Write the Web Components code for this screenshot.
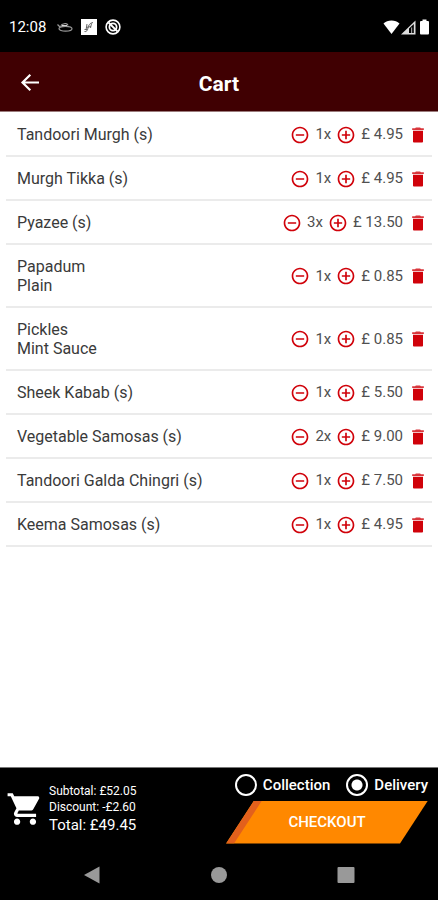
<!DOCTYPE html>
<html lang="en">
<head>
<meta charset="utf-8">
<meta name="viewport" content="width=device-width, initial-scale=1">
<title>Cart</title>
<style>
  body { margin: 0; background: #fff; font-family: Roboto, "Liberation Sans", sans-serif; }
</style>
</head>
<body>
<cart-screen>
  <status-bar slot="top">12:08</status-bar>
  <app-header slot="top">Cart</app-header>
  <cart-item qty="1" price="4.95">Tandoori Murgh (s)</cart-item>
  <cart-item qty="1" price="4.95">Murgh Tikka (s)</cart-item>
  <cart-item qty="3" price="13.50">Pyazee (s)</cart-item>
  <cart-item qty="1" price="0.85">Papadum<span slot="option">Plain</span></cart-item>
  <cart-item qty="1" price="0.85">Pickles<span slot="option">Mint Sauce</span></cart-item>
  <cart-item qty="1" price="5.50">Sheek Kabab (s)</cart-item>
  <cart-item qty="2" price="9.00">Vegetable Samosas (s)</cart-item>
  <cart-item qty="1" price="7.50">Tandoori Galda Chingri (s)</cart-item>
  <cart-item qty="1" price="4.95">Keema Samosas (s)</cart-item>
  <cart-summary slot="bottom">
    <span slot="subtotal">Subtotal: £52.05</span>
    <span slot="discount">Discount: -£2.60</span>
    <span slot="total">Total: £49.45</span>
  </cart-summary>
  <system-nav slot="bottom"></system-nav>
</cart-screen>

<script>
  const define = (name, html, setup) => {
    const template = document.createElement('template');
    template.innerHTML = html;
    customElements.define(name, class extends HTMLElement {
      constructor() {
        super();
        this.attachShadow({ mode: 'open' }).append(template.content.cloneNode(true));
      }
      connectedCallback() { if (setup) setup(this, this.shadowRoot); }
    });
  };

  define('cart-screen', `
    <style>
      :host { display: flex; flex-direction: column; min-height: 100vh; }
      main { flex: 1; padding: 1px 6px 0; }
    </style>
    <slot name="top"></slot>
    <main role="list"><slot></slot></main>
    <slot name="bottom"></slot>`);

  define('status-bar', `
    <style>
      :host { display: flex; align-items: center; justify-content: space-between; height: 50px;
        padding: 2px 6px 0 9px; background: #000; color: #fff; font-size: 15px; line-height: 20px; }
      div { display: flex; align-items: center; }
      .left { gap: 8px; }
      .note { margin-left: 3px; }
      svg { display: block; }
    </style>
    <div class="left">
      <slot></slot>
      <svg class="note" width="16" height="16" viewBox="0 0 16 16" fill="none" stroke="#999" stroke-width="1.200">
        <path d="M.5 5.500 3 8"/>
        <path d="M4 8.500c-.5-2 .8-3.500 2.500-3.500 1-.8 4-.8 4.500 1.500"/>
        <path d="M5 7h5" stroke="#ddd" stroke-width="2"/>
        <ellipse cx="8.500" cy="9.800" rx="6.500" ry="2.400"/>
      </svg>
      <svg width="16" height="16" viewBox="0 0 16 16">
        <path fill="#fff" d="M0 0h16v16H0z"/>
        <g fill="none" stroke="#666" stroke-width="1"><path d="M3.500 12.500c2 .5 3-1 3.500-3.500s1.500-5 5-5.500M5 8.500l5-1M6 5l-.8 5M10.500 4.500 9.500 9M3.500 10.500h3"/></g>
      </svg>
      <svg width="16" height="16" viewBox="0 0 16 16" fill="none" stroke="#fff">
        <circle cx="8" cy="8" r="6.900" stroke-width="1.600"/>
        <circle cx="8" cy="8" r="3.600" stroke-width="1.800"/>
        <path stroke-width="1.800" d="m3.500 3.500 9 9"/>
      </svg>
    </div>
    <div>
      <svg width="17" height="16" viewBox="0 0 17 16"><path fill="#fff" d="M.5 4.500C2.500 2.500 5.300 1.500 8.500 1.500s6 1 8 3L8.500 15z"/></svg>
      <svg width="16" height="16" viewBox="0 0 16 16"><path fill="#ddd" d="M15.500 1.500V15.500H1z"/><path fill="#000" d="M9 9.500 13.800 5v9H9z"/><path fill="#999" d="M11 8.500h1.200V14H11z"/></svg>
      <svg width="16" height="16" viewBox="0 0 16 16"><path fill="#fff" d="M6.500.5h4V2h1.200c.9 0 1.300.5 1.300 1.300v10.900c0 .8-.5 1.300-1.300 1.300H5.300C4.500 15.500 4 15 4 14.200V3.300C4 2.500 4.500 2 5.300 2h1.200z"/></svg>
    </div>`);

  define('app-header', `
    <style>
      :host { display: grid; grid-template-columns: 44px 1fr 44px; align-items: center; height: 59px;
        padding: 0 8px; background: #400002; color: #fff; border-bottom: 1px solid #9b7c7c; }
      h1 { margin: 0; padding-top: 4px; text-align: center; font-size: 21px; font-weight: 700; line-height: 24px; }
      button { padding: 10px; border: 0; background: none; color: inherit; }
      svg { display: block; }
    </style>
    <button type="button" aria-label="Back">
      <svg width="24" height="24" viewBox="0 0 24 24" fill="none" stroke="currentColor" stroke-width="2.200"><path d="M21 12.500H4.500M12.300 4.700 4.500 12.500l7.800 7.800"/></svg>
    </button>
    <h1><slot></slot></h1>`);

  define('cart-item', `
    <style>
      :host { display: flex; align-items: center; justify-content: space-between;
        padding: 12px 4px 11px 11px; border-bottom: 2px solid #ebebeb;
        color: #3a3a3a; font-size: 16px; line-height: 19px; }
      ::slotted(span) { display: block; }
      .controls { display: flex; align-items: center; gap: 5px; color: #505050; font-size: 15px; white-space: nowrap; }
      button { padding: 0; border: 0; background: none; color: #d0020a; }
      svg { display: block; width: 20px; height: 20px; margin: -1px 0; fill: currentColor; }
    </style>
    <div><slot></slot><slot name="option"></slot></div>
    <div class="controls">
      <button type="button" aria-label="Remove one"><svg viewBox="0 0 24 24"><path d="M7 11v2h10v-2zm5-9C6.480 2 2 6.480 2 12s4.480 10 10 10 10-4.480 10-10S17.520 2 12 2m0 18c-4.410 0-8-3.590-8-8s3.590-8 8-8 8 3.590 8 8-3.590 8-8 8"/></svg></button>
      <span class="qty"></span>
      <button type="button" aria-label="Add one"><svg viewBox="0 0 24 24"><path d="M13 7h-2v4H7v2h4v4h2v-4h4v-2h-4zm-1-5C6.480 2 2 6.480 2 12s4.480 10 10 10 10-4.480 10-10S17.520 2 12 2m0 18c-4.410 0-8-3.590-8-8s3.590-8 8-8 8 3.590 8 8-3.590 8-8 8"/></svg></button>
      <span class="price"></span>
      <button type="button" aria-label="Delete item"><svg viewBox="0 0 24 24"><path d="M6 20c0 .6.400 1 1 1h10c.6 0 1-.4 1-1V7H6z"/><path opacity=".8" d="M19 4h-3.500l-1-1h-5l-1 1H5v2h14z"/></svg></button>
    </div>`, (host, root) => {
      host.setAttribute('role', 'listitem');
      root.querySelector('.qty').textContent = host.getAttribute('qty') + 'x';
      root.querySelector('.price').textContent = '£ ' + host.getAttribute('price');
    });

  define('cart-summary', `
    <style>
      :host { display: flex; justify-content: space-between; align-items: center; height: 82px;
        padding: 0 10px 0 6px; background: #000; color: #fff; border-top: 1px solid #777; }
      .sums { display: flex; align-items: center; gap: 5px; }
      .lines { display: flex; flex-direction: column; font-size: 12px; line-height: 16px; }
      .total { font-size: 15px; line-height: 20px; }
      .order { display: flex; flex-direction: column; align-items: flex-end; gap: 4px; padding-bottom: 2px; }
      fieldset { display: flex; gap: 16px; margin: 0; padding: 0; border: 0; }
      label { display: flex; align-items: center; gap: 6px; font-size: 15px; font-weight: 500; line-height: 24px; }
      input { appearance: none; box-sizing: border-box; width: 22px; height: 22px; margin: 0;
        border: 2px solid #fff; border-radius: 50%; }
      input:checked { background: radial-gradient(circle, #fff 5px, transparent 6px); }
      button { width: 202px; height: 43px; padding: 0; border: 0; color: #fff;
        font: 500 15px/20px Roboto, "Liberation Sans", sans-serif;
        clip-path: polygon(28px 0, 100% 0, calc(100% - 28px) 100%, 0 100%);
        background: linear-gradient(#ff8800, #ff8800); position: relative; }
      button::before { content: ""; position: absolute; inset: 0; background: #e2601c;
        clip-path: polygon(28px 0, 36px 0, 8px 100%, 0 100%); }
    </style>
    <div class="sums">
      <svg width="38" height="38" viewBox="0 0 24 24" fill="#fff" aria-hidden="true"><path d="M7 18c-1.100 0-1.990.9-1.990 2S5.900 22 7 22s2-.9 2-2-.9-2-2-2M1 2v2h2l3.600 7.590-1.350 2.450c-.16.280-.25.610-.25.960 0 1.100.9 2 2 2h12v-2H7.420c-.14 0-.25-.11-.25-.25l.03-.12.9-1.630h7.450c.75 0 1.410-.41 1.750-1.030l3.580-6.490c.08-.14.120-.31.120-.480 0-.55-.45-1-1-1H5.210l-.94-2zm16 16c-1.100 0-1.990.9-1.990 2s.89 2 1.990 2 2-.9 2-2-.9-2-2-2"/></svg>
      <div class="lines">
        <slot name="subtotal"></slot>
        <slot name="discount"></slot>
        <div class="total"><slot name="total"></slot></div>
      </div>
    </div>
    <div class="order">
      <fieldset aria-label="Order type">
        <label><input type="radio" name="mode">Collection</label>
        <label><input type="radio" name="mode" checked>Delivery</label>
      </fieldset>
      <button type="button">CHECKOUT</button>
    </div>`);

  define('system-nav', `
    <style>
      :host { display: flex; justify-content: space-between; height: 50px; padding: 0 82px; background: #000; }
      button { display: flex; align-items: center; padding: 0; border: 0; background: none; color: #999; }
      svg { display: block; fill: currentColor; }
    </style>
    <button type="button" aria-label="Back"><svg width="20" height="20" viewBox="0 0 20 20"><path d="M2 10 17.500 1.500v17z"/></svg></button>
    <button type="button" aria-label="Home"><svg width="20" height="20" viewBox="0 0 20 20"><circle cx="10" cy="10" r="8"/></svg></button>
    <button type="button" aria-label="Recent apps"><svg width="20" height="20" viewBox="0 0 20 20"><rect x="1.500" y="2" width="17" height="16" rx="1"/></svg></button>`);
</script>
</body>
</html>
